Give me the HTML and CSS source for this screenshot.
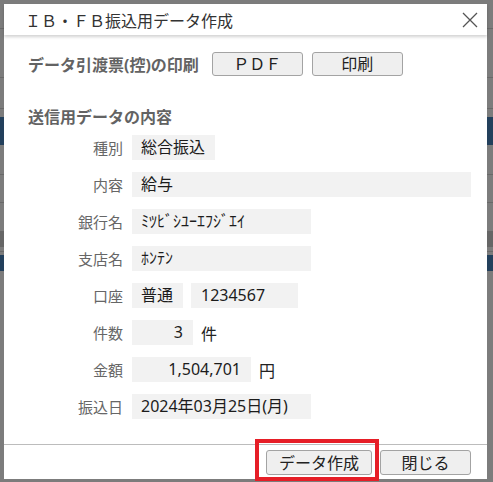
FILE: index.html
```html
<!DOCTYPE html>
<html>
	<head>
		<meta charset="utf-8">
		<link rel="stylesheet" href="styles.css">
	</head>
	<body>
		<div class="fundal">
			<div class="rand r1"></div>
			<div class="rand r2"></div>
			<div class="rand r3"></div>
			<div class="rand r4"></div>
			<div class="rand albastru"></div>
			<div class="rand r5"></div>
			<div class="rand r6"></div>
			<div class="rand r7"></div>
			<div class="rand inchis"></div>
			<div class="rand r8"></div>
			<div class="rand r9"></div>
			<div class="rand albastru2"></div>
		</div>

		<div class="dialog">
			<div class="titlu">
				<span>ＩＢ・ＦＢ振込用データ作成</span>
				<svg class="inchide" width="16" height="16" viewBox="0 0 16 16">
					<path d="M1 1 L15 15 M15 1 L1 15" stroke="#555" stroke-width="1.3" fill="none"/>
				</svg>
			</div>

			<div class="continut">
				<div class="tiparire">
					<span class="eticheta-mare">データ引渡票(控)の印刷</span>
					<button class="buton">ＰＤＦ</button>
					<button class="buton">印刷</button>
				</div>

				<div class="sectiune">送信用データの内容</div>

				<div class="rand-date">
					<div class="eticheta">種別</div>
					<div class="valoare w83">総合振込</div>
				</div>
				<div class="rand-date">
					<div class="eticheta">内容</div>
					<div class="valoare w339">給与</div>
				</div>
				<div class="rand-date">
					<div class="eticheta">銀行名</div>
					<div class="valoare w179">ﾐﾂﾋﾞｼﾕｰｴﾌｼﾞｴｲ</div>
				</div>
				<div class="rand-date">
					<div class="eticheta">支店名</div>
					<div class="valoare w179">ﾎﾝﾃﾝ</div>
				</div>
				<div class="rand-date">
					<div class="eticheta">口座</div>
					<div class="valoare w51">普通</div>
					<div class="valoare w107">1234567</div>
				</div>
				<div class="rand-date">
					<div class="eticheta">件数</div>
					<div class="valoare w61 dreapta">3</div>
					<span class="unitate">件</span>
				</div>
				<div class="rand-date">
					<div class="eticheta">金額</div>
					<div class="valoare w119 dreapta">1,504,701</div>
					<span class="unitate">円</span>
				</div>
				<div class="rand-date ultim">
					<div class="eticheta">振込日</div>
					<div class="valoare w179">2024年03月25日(月)</div>
				</div>
			</div>

			<div class="subsol">
				<button class="buton creeaza">データ作成</button>
				<button class="buton">閉じる</button>
			</div>

			<div class="evidentiere"></div>
		</div>
	</body>
</html>
```

FILE: styles.css
```css
			body{
				margin: 0;
				width: 493px;
				height: 482px;
				overflow: hidden;
				position: relative;
				font-family: "Noto Sans", "Noto Sans CJK JP", sans-serif;
				background-color: #7c7c7c;
			}
			.fundal{
				display: flex;
				flex-direction: column;
				height: 482px;
			}
			.rand{
				flex: none;
				border-bottom: 1px solid #696969;
			}
			.r1{ height: 28px; }
			.r2{ height: 48px; }
			.r3{ height: 30px; }
			.r4{ height: 8px; border-bottom: none; }
			.albastru{ height: 28px; background-color: #23405c; border-bottom: none; }
			.r5{ height: 29px; }
			.r6{ height: 27px; }
			.r7{ height: 28px; border-bottom: none; }
			.inchis{ height: 16px; background-color: #666; border-bottom: none; }
			.r8{ height: 4px; }
			.r9{ height: 3px; border-bottom: none; }
			.albastru2{ height: 16px; background-color: #23405c; border-bottom: none; }

			.dialog{
				position: absolute;
				left: 4px;
				top: 4px;
				width: 483px;
				height: 475px;
				background-color: #fff;
				display: flex;
				flex-direction: column;
			}
			.titlu{
				height: 31px;
				display: flex;
				align-items: center;
				justify-content: space-between;
				padding: 0 9px 0 21px;
				font-size: 16px;
				color: #333;
				box-shadow: 0 2px 3px rgba(0, 0, 0, 0.18);
				position: relative;
			}
			.inchide{
				margin-top: 1px;
			}
			.continut{
				flex: 1;
				padding: 17px 0 0 24px;
			}
			.tiparire{
				display: flex;
				align-items: center;
				height: 24px;
			}
			.eticheta-mare{
				font-size: 16px;
				font-weight: bold;
				color: #636363;
				margin-right: 13px;
			}
			.buton{
				font-family: "Noto Sans", "Noto Sans CJK JP", sans-serif;
				font-size: 16px;
				color: #222;
				background-color: #efefef;
				border: 1px solid #a3a3a3;
				border-radius: 3px;
				width: 91px;
				height: 24px;
				padding: 0;
				line-height: 20px;
				margin-right: 9px;
			}
			.sectiune{
				margin-top: 30px;
				font-size: 16px;
				font-weight: bold;
				color: #636363;
				line-height: 22px;
				margin-bottom: 7px;
			}
			.rand-date{
				display: flex;
				align-items: center;
				height: 25px;
				margin-bottom: 12px;
			}
			.rand-date.ultim{
				margin-top: 2px;
			}
			.eticheta{
				width: 95px;
				text-align: right;
				font-size: 15px;
				color: #666;
				margin-right: 9px;
			}
			.valoare{
				height: 25px;
				line-height: 25px;
				background-color: #f2f2f2;
				font-size: 16px;
				color: #1c1c1c;
				padding: 0 9px;
				box-sizing: border-box;
				margin-right: 8px;
				white-space: nowrap;
			}
			.dreapta{
				text-align: right;
				padding-right: 10px;
			}
			.w83{ width: 83px; }
			.w339{ width: 339px; }
			.w179{ width: 179px; }
			.w51{ width: 51px; }
			.w107{ width: 107px; padding-left: 10px; }
			.w61{ width: 61px; }
			.w119{ width: 119px; }
			.unitate{
				font-size: 16px;
				color: #222;
			}
			.subsol{
				height: 35px;
				border-top: 1px solid #bcbcbc;
				display: flex;
				justify-content: flex-end;
				align-items: flex-start;
				padding: 5px 8px 0 0;
				box-sizing: border-box;
			}
			.subsol .buton{
				height: 25px;
				margin-right: 8px;
			}
			.subsol .creeaza{
				width: 106px;
			}
			.evidentiere{
				position: absolute;
				left: 251px;
				top: 435px;
				width: 124px;
				height: 42px;
				box-sizing: border-box;
				border: 4px solid #e61e27;
			}
```
